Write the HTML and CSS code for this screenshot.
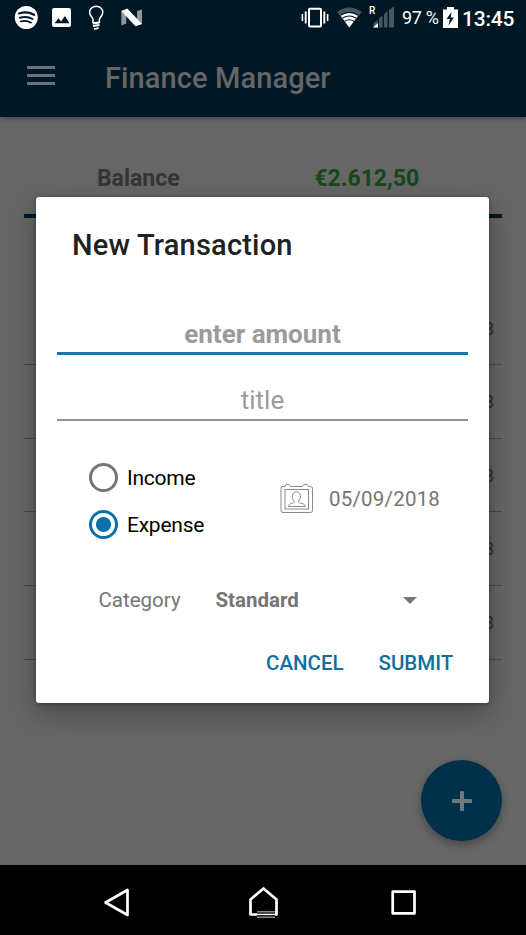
FILE: index.html
```html
<!DOCTYPE html>
<html lang="en">
<head>
<meta charset="utf-8">
<title>Finance Manager</title>
<link rel="stylesheet" href="styles.css">
</head>
<body>
<div class="phone">
  <header class="top">
    <div class="status">
      <svg class="notifications" width="150" height="34" viewBox="0 0 150 34">
        <circle cx="26.300" cy="17.500" r="11.500" fill="#fff"/>
        <g fill="none" stroke="#001825" stroke-linecap="round">
          <path d="M19 13.500q8-2.600 15 1.300" stroke-width="2.300"/>
          <path d="M20 17.700q7-2 12.500 1.300" stroke-width="2"/>
          <path d="M20.500 21.500q6-1.600 10.500 1.200" stroke-width="1.700"/>
        </g>
        <rect x="52" y="8" width="19" height="19" rx="2" fill="#fff"/>
        <path d="M54.500 23.300l4-5 2.500 3.200 4-5.500 4.500 7.300z" fill="#001825"/>
        <path d="M93 22.500v-3c0-2-3.400-3.600-3.400-7.300a6.600 5.900 0 0 1 13.200 0c0 3.700-3.400 5.300-3.400 7.300v3q-3.200 1.500-6.400 0z" fill="none" stroke="#fff" stroke-width="1.500"/>
        <path d="M92.800 23.500l6.800-1.300M93 26l6.500-1M94 28.500q2.500 1.200 4.500-1" fill="none" stroke="#fff" stroke-width="1.800"/>
        <path d="M121.300 11v14.500l5-2V11zM137 25.500l5-1.500V9.500l-5 1.500z" fill="#8c989e"/>
        <path d="M121.300 11l6-2.500 14.700 15.500-6.500 2.300z" fill="#fff"/>
      </svg>
      <svg class="signals" width="100" height="34" viewBox="0 0 100 34">
        <g fill="none" stroke="#fff">
          <rect x="9" y="8.800" width="12" height="17.700" rx="1" stroke-width="2"/>
          <path d="M5.700 11.500v12M24.300 11.500v12" stroke-width="1.900"/>
          <path d="M2.400 14v7M27.600 14v7" stroke-width="1.600"/>
        </g>
        <path d="M49.300 27.500L37 12q12.300-9 24.600 0z" fill="#465760"/>
        <path d="M49.300 27.500L40.500 15.500q8.800-6 17.600 0z" fill="#fff"/>
        <path d="M40.500 15.200q8.800-5.600 17.600 0M42.500 18.300q6.800-4.500 13.600 0M44.800 21.300q4.500-3 9 0" fill="none" stroke="#001825" stroke-width="1.100"/>
        <path d="M73.500 27.500v-4l4-3.500v7.500zM79 27.500v-9l3.500-3v12zM84 27.500V14.300l3.500-3.200v16.400zM89 27.500V10l5-3.500v21z" fill="#465760"/>
        <path d="M73 27.500l5-4.500v4.500z" fill="#fff"/>
      </svg>
      <span class="roaming">R</span>
      <span class="percent">97 %</span>
      <svg class="battery" width="15" height="22" viewBox="0 0 15 22">
        <path d="M0 2.500h4V0h7v2.500h4V21H0z" fill="#fff"/>
        <path d="M8.500 5l-5 7h3.300l-1.300 6.500 5.500-8H7.700z" fill="#001825"/>
      </svg>
      <span class="clock">13:45</span>
    </div>
    <div class="appbar">
      <div class="menu"><i></i><i></i><i></i></div>
      <h1>Finance Manager</h1>
    </div>
  </header>
  <main class="content">
    <div class="summary"><b class="label">Balance</b><b class="balance">€2.612,50</b></div>
    <div class="list">
      <div class="row first">8</div>
      <div class="row">8</div>
      <div class="row">8</div>
      <div class="row">8</div>
      <div class="row">8</div>
    </div>
    <div class="fab"><svg width="20" height="20" viewBox="0 0 20 20"><path d="M10 1.500v17M1.500 10h17" stroke="#70797e" stroke-width="4" stroke-linecap="round"/></svg></div>
  </main>
  <nav class="nav">
    <svg width="526" height="70" viewBox="0 0 526 70" fill="none" stroke="#fff" stroke-width="2.700" stroke-linejoin="round">
      <path d="M105.500 37.500l22-12.500v25z"/>
      <path d="M250.500 49.500V34.500l13-11 13 11V49.500z"/>
      <rect x="392.700" y="26.700" width="21.800" height="21.600"/>
      <path d="M257 46.500h18M257 49.500h18M257 52.200h18" stroke="#000" stroke-width="2.700"/>
      <path d="M257 46.800h18M257 52.200h18" stroke="#888" stroke-width="1.500"/>
      <path d="M257 49.500h18" stroke-width="1.300"/>
    </svg>
  </nav>
  <section class="dialog">
    <h2>New Transaction</h2>
    <div class="field amount"><span>enter amount</span></div>
    <div class="field title"><span>title</span></div>
    <div class="options">
      <div class="radios">
        <div class="radio"><i class="dot"></i><span class="income">Income</span></div>
        <div class="radio"><i class="dot on"></i><span class="expense">Expense</span></div>
      </div>
      <div class="date">
        <svg width="34" height="30" viewBox="0 0 34 30" fill="none" stroke="#888" stroke-width="1">
          <path d="M3 2.500h2l1-2h3l1.500 2h12l1.500-2h3l1.500 2h2q2 0 2 2v22q0 2-2 2h-27.500q-2 0-2-2v-22q0-2 2-2z"/>
          <rect x="5" y="5.500" width="23.500" height="19.500"/>
          <path d="M8.500 22.500c0-4 6-2.500 6-5-2-2-2.500-4-2-6 .7-5 7.300-5 8 0 .3 2-.5 4-2 6 0 2.500 6.500 1 7 5z"/>
        </svg>
        <span>05/09/2018</span>
      </div>
    </div>
    <div class="category"><span class="key">Category</span><b>Standard</b><i class="caret"></i></div>
    <div class="actions"><span class="cancel">CANCEL</span><span class="submit">SUBMIT</span></div>
  </section>
</div>
</body>
</html>
```
FILE: styles.css
```css
* { box-sizing: border-box; }
body { margin: 0; font-family: Roboto, sans-serif; background: #666; }
h1, h2 { margin: 0; font-weight: 500; white-space: nowrap; }
span, b { white-space: nowrap; }
.phone { position: relative; display: flex; flex-direction: column; width: 526px; height: 935px; overflow: hidden; background: #666; }
.top { height: 117px; background: #001825; box-shadow: 0 1px 5px rgba(0,0,0,.4); z-index: 1; }
.status { display: flex; height: 35px; color: #fff; position: relative; }
.notifications { width: 150px; }
.signals { margin-left: 150px; }
.roaming { position: absolute; left: 369px; top: 5px; font-size: 10px; line-height: 12px; font-weight: 500; }
.percent { width: 41px; margin-left: 2px; font-size: 18px; line-height: 36px; letter-spacing: -.3px; }
.battery { margin-top: 7px; }
.clock { margin-left: 4px; font-size: 21px; line-height: 38px; font-weight: 500; letter-spacing: -.2px; }
.appbar { display: flex; height: 82px; padding-left: 27px; }
.menu { display: flex; flex-direction: column; gap: 5px; width: 28px; margin-top: 31px; }
.menu i { height: 3px; background: #697379; }
.appbar h1 { margin-left: 50px; color: #666; font-size: 29px; line-height: 86px; letter-spacing: .1px; }
.content { position: relative; height: 748px; padding: 0 24px; }
.summary { display: flex; height: 101px; padding: 48px 21px 0 0; border-bottom: 4px solid #001825; font-size: 23px; line-height: 28px; }
.summary b { flex: 1; text-align: center; }
.label { color: #353535; }
.balance { color: #174719; }
.row { height: 73.700px; padding: 24px 8px 0; border-bottom: 1px solid #4b4b4b; text-align: right; font-size: 18px; line-height: 26px; color: #303030; }
.row.first { height: 147px; padding-top: 98px; }
.fab { position: absolute; left: 421px; top: 643px; display: grid; place-items: center; width: 81px; height: 81px; border-radius: 50%; background: #00304a; box-shadow: 0 4px 9px rgba(0,0,0,.3); }
.nav { height: 70px; background: #000; z-index: 1; }
.dialog { position: absolute; z-index: 2; left: 36px; top: 197px; width: 453px; height: 505.500px; padding: 0 21px; border-radius: 3px; background: #fff; box-shadow: 0 10px 28px rgba(0,0,0,.3), 0 1px 4px rgba(0,0,0,.35); }
.dialog h2 { height: 100px; padding: 30px 0 0 15px; color: #212121; font-size: 29px; line-height: 36px; letter-spacing: .2px; }
.field { text-align: center; color: #9b9b9b; font-size: 26px; line-height: 30px; }
.amount { height: 58px; padding-top: 22px; font-weight: 700; border-bottom: 3px solid #1679a5; }
.title { height: 66px; padding-top: 30px; border-bottom: 2px solid #949494; }
.options { display: flex; height: 133px; padding: 33px 0 0 32px; }
.radios { width: 191px; }
.radio { display: flex; align-items: center; gap: 9px; height: 47px; font-size: 21px; letter-spacing: -.25px; color: #000; }
.radio span { padding-top: 1px; }
.dot { width: 29px; height: 29px; border: 3px solid #757575; border-radius: 50%; }
.on { border-color: #0b71ab; background: radial-gradient(circle, #0b71ab 7px, transparent 8px); }
.date { display: flex; gap: 15px; padding-top: 30px; color: #757575; font-size: 20.500px; line-height: 30px; letter-spacing: .2px; }
.category { display: flex; height: 72px; padding: 31px 0 0 41.500px; color: #757575; font-size: 20.500px; line-height: 30px; }
.key { width: 117px; }
.category b { width: 187.500px; }
.caret { width: 14px; height: 7px; margin-top: 12px; background: #757575; clip-path: polygon(0 0, 100% 0, 50% 100%); }
.actions { display: flex; padding: 22px 0 0 209px; color: #0f6fa0; font-size: 20.500px; line-height: 30px; font-weight: 500; }
.cancel { width: 112.500px; }
```
